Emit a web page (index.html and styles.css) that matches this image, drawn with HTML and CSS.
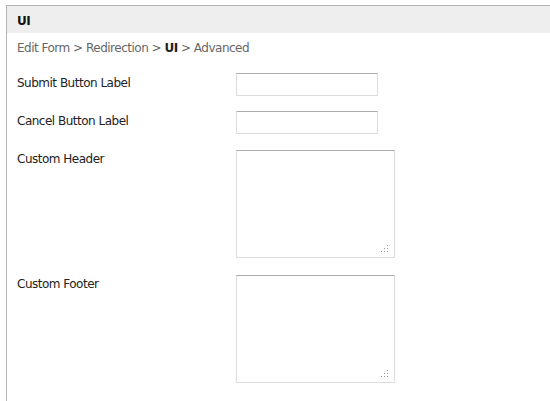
FILE: index.html
```html
<!DOCTYPE html>
<html>
<head>
<meta charset="utf-8">
<link rel="stylesheet" href="styles.css">
</head>
<body>
<div class="panel">
  <div class="panel-head">UI</div>
  <div class="crumbs">Edit Form &gt; Redirection &gt; <b>UI</b> &gt; Advanced</div>
  <div class="form">
    <div class="row row-input">
      <label class="lbl">Submit Button Label</label>
      <input class="txt" type="text">
    </div>
    <div class="row row-input2">
      <label class="lbl">Cancel Button Label</label>
      <input class="txt" type="text">
    </div>
    <div class="row row-area">
      <label class="lbl">Custom Header</label>
      <div class="area-wrap">
        <textarea class="area"></textarea>
        <svg class="grip" width="7" height="7" viewBox="0 0 7 7"><rect x="6" y="0" width="1" height="1"/><rect x="3" y="3" width="1" height="1"/><rect x="6" y="3" width="1" height="1"/><rect x="0" y="6" width="1" height="1"/><rect x="3" y="6" width="1" height="1"/><rect x="6" y="6" width="1" height="1"/></svg>
      </div>
    </div>
    <div class="row row-area last">
      <label class="lbl">Custom Footer</label>
      <div class="area-wrap">
        <textarea class="area"></textarea>
        <svg class="grip" width="7" height="7" viewBox="0 0 7 7"><rect x="6" y="0" width="1" height="1"/><rect x="3" y="3" width="1" height="1"/><rect x="6" y="3" width="1" height="1"/><rect x="0" y="6" width="1" height="1"/><rect x="3" y="6" width="1" height="1"/><rect x="6" y="6" width="1" height="1"/></svg>
      </div>
    </div>
  </div>
</div>
</body>
</html>
```
FILE: styles.css
```css
html, body {
  margin: 0;
  padding: 0;
  background: #fff;
  overflow: hidden;
  height: 100%;
}
body {
  font-family: "DejaVu Sans", Verdana, sans-serif;
  font-size: 12px;
  line-height: 14px;
  letter-spacing: -0.5px;
  color: #222;
  padding-top: 5px;
  box-sizing: border-box;
}
.panel {
  box-sizing: border-box;
  margin: 0 -20px 0 6px;
  border-top: 1px solid #b4b4b4;
  border-left: 1px solid #b4b4b4;
  height: 100%;
}
.panel-head {
  background: #eeeeee;
  padding: 8px 10px 5px;
  font-weight: bold;
  color: #111;
}
.crumbs {
  padding: 8px 10px 0;
  color: #666;
}
.crumbs b {
  color: #222;
}
.form {
  padding: 18px 10px 0;
}
.row {
  display: flex;
  align-items: flex-start;
}
.row-input { margin-bottom: 15px; }
.row-input2 { margin-bottom: 16px; }
.row-area { margin-bottom: 17px; }
.row-area.last { margin-bottom: 0; }
.lbl {
  width: 219px;
  flex: none;
  padding-top: 3px;
}
.row-area .lbl {
  padding-top: 2px;
}
.txt {
  box-sizing: border-box;
  width: 142px;
  height: 23px;
  margin: 0;
  padding: 2px 4px;
  border: 1px solid #dcdcdc;
  border-top-color: #ababab;
  background: #fff;
  outline: none;
}
.area-wrap {
  position: relative;
  width: 159px;
  height: 108px;
}
.area {
  display: block;
  box-sizing: border-box;
  width: 159px;
  height: 108px;
  margin: 0;
  padding: 2px 4px;
  border: 1px solid #dcdcdc;
  border-top-color: #ababab;
  resize: none;
  outline: none;
  background: #fff;
}
.grip {
  position: absolute;
  right: 7px;
  bottom: 6px;
  fill: #9a9a9a;
}
```
